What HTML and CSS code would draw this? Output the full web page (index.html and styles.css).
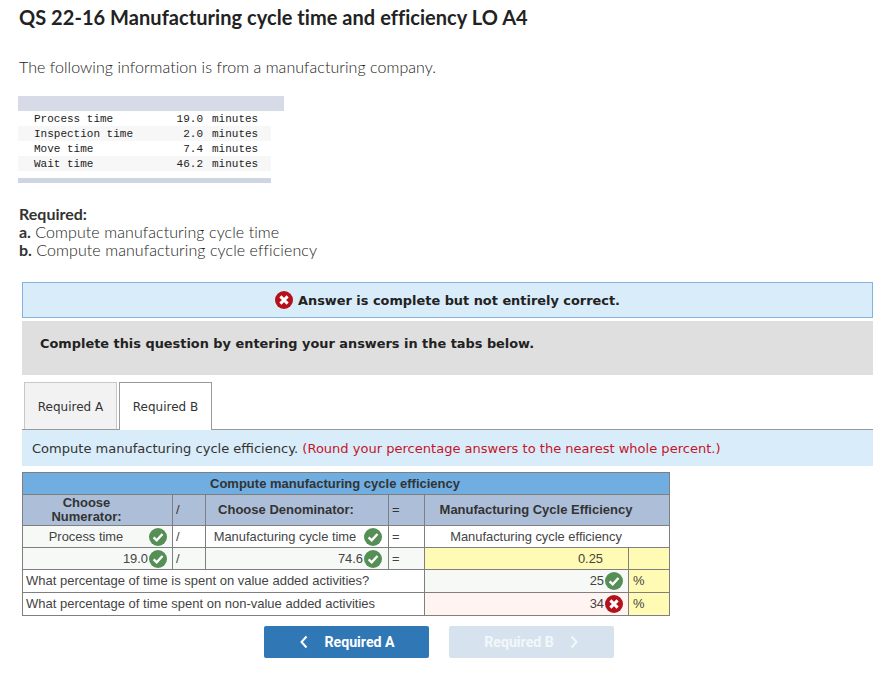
FILE: index.html
```html
<!DOCTYPE html>
<html lang="en">
<head>
<meta charset="utf-8">
<title>QS 22-16</title>
<link rel="stylesheet" href="styles.css">
</head>
<body>
<svg class="defs" width="0" height="0" aria-hidden="true">
  <symbol id="ok" viewBox="0 0 18 18"><circle cx="9" cy="9" r="9" fill="#568f56"/><path d="M4.6 9.4l3.1 3 5.8-6.4" fill="none" stroke="#fff" stroke-width="2.4"/></symbol>
  <symbol id="bad" viewBox="0 0 18 18"><circle cx="9" cy="9" r="9" fill="#b5111b"/><path d="M5.4 5.4l7.2 7.2M12.6 5.400l-7.2 7.2" fill="none" stroke="#fff" stroke-width="3"/></symbol>
</svg>
<main class="page">
  <h1 class="title">QS 22-16 Manufacturing cycle time and efficiency LO A4</h1>
  <p class="intro">The following information is from a manufacturing company.</p>

  <div class="data">
    <div class="data-head"></div>
    <div class="data-row"><span class="d-name">Process time</span><span class="d-num">19.0</span><span class="d-unit">minutes</span></div>
    <div class="data-row alt"><span class="d-name">Inspection time</span><span class="d-num">2.0</span><span class="d-unit">minutes</span></div>
    <div class="data-row"><span class="d-name">Move time</span><span class="d-num">7.4</span><span class="d-unit">minutes</span></div>
    <div class="data-row alt"><span class="d-name">Wait time</span><span class="d-num">46.2</span><span class="d-unit">minutes</span></div>
    <div class="data-foot"></div>
  </div>

  <div class="required">
    <div class="req-head">Required:</div>
    <div><b>a.</b> Compute manufacturing cycle time</div>
    <div><b>b.</b> Compute manufacturing cycle efficiency</div>
  </div>

  <div class="answer"><svg class="ic-lg"><use href="#bad"/></svg><span class="answer-text">Answer is complete but not entirely correct.</span></div>
  <div class="complete">Complete this question by entering your answers in the tabs below.</div>

  <div class="tabs">
    <div class="tab off">Required A</div>
    <div class="tab on">Required B</div>
  </div>
  <div class="instr">Compute manufacturing cycle efficiency. <span class="red">(Round your percentage answers to the nearest whole percent.)</span></div>

  <table class="calc">
    <colgroup><col class="c1"><col class="c2"><col class="c3"><col class="c4"><col class="c5"><col class="c6"></colgroup>
    <tr class="r-title"><th colspan="6">Compute manufacturing cycle efficiency</th></tr>
    <tr class="r-head">
      <th>Choose<br>Numerator:</th><th class="op">/</th><th>Choose Denominator:</th><th class="op">=</th><th colspan="2">Manufacturing Cycle Efficiency</th>
    </tr>
    <tr class="r-a">
      <td class="pale center"><div class="cellic"><span class="grow">Process time</span><svg class="ic"><use href="#ok"/></svg></div></td><td class="op">/</td>
      <td class="center"><div class="cellic wide"><span class="grow">Manufacturing cycle time</span><svg class="ic"><use href="#ok"/></svg></div></td><td class="op">=</td>
      <td colspan="2" class="center eff">Manufacturing cycle efficiency</td>
    </tr>
    <tr class="r-b">
      <td class="pale"><div class="cellic end">19.0<svg class="ic"><use href="#ok"/></svg></div></td><td class="pale op">/</td>
      <td class="pale"><div class="cellic end wide">74.6<svg class="ic"><use href="#ok"/></svg></div></td><td class="pale op">=</td>
      <td class="yellow num">0.25</td><td class="yellow"></td>
    </tr>
    <tr class="r-c">
      <td colspan="4" class="q">What percentage of time is spent on value added activities?</td>
      <td class="pale"><div class="cellic end">25<svg class="ic"><use href="#ok"/></svg></div></td><td class="yellow pct">%</td>
    </tr>
    <tr class="r-c">
      <td colspan="4" class="q">What percentage of time spent on non-value added activities</td>
      <td class="pink"><div class="cellic end">34<svg class="ic"><use href="#bad"/></svg></div></td><td class="yellow pct">%</td>
    </tr>
  </table>

  <div class="nav">
    <div class="btn active"><svg class="chev" viewBox="0 0 8 14"><path d="M6.5 1.5L1.5 7l5 5.500" fill="none" stroke="currentColor" stroke-width="2"/></svg><span>Required A</span></div>
    <div class="btn muted"><span>Required B</span><svg class="chev" viewBox="0 0 8 14"><path d="M1.500 1.500l5 5.500-5 5.500" fill="none" stroke="currentColor" stroke-width="2"/></svg></div>
  </div>
</main>
</body>
</html>
```

FILE: styles.css
```css
* { box-sizing: border-box; }
html, body { margin: 0; padding: 0; background: #fff; }
.defs { display: block; height: 0; }
.page { width: 890px; height: 674px; overflow: hidden; padding-top: 5px; font-family: "Lato", sans-serif; color: #444; }

.title { margin: 0 0 0 19px; font: 700 20px/24px "Lato", sans-serif; color: #222; letter-spacing: .045px; }
.intro { margin: 26px 0 0 19px; font: 300 16px/24px "Lato", sans-serif; color: #222; letter-spacing: .05px; }

.data { margin: 17px 0 0 18px; width: 266px; font: 400 11px/15px "Liberation Mono", monospace; color: #222; }
.data-head { height: 15px; background: #d6dbe7; }
.data-row { display: flex; width: 253px; height: 15px; padding: 0 0 0 16px; line-height: 16px; }
.data-row.alt { background: #f7f7f7; }
.d-name { width: 114px; }
.d-num { width: 55px; text-align: right; }
.d-unit { margin-left: 9px; }
.data-foot { width: 253px; height: 5px; margin-top: 7px; background: #ced7e1; }

.required { margin: 22px 0 0 19px; font: 300 16px/18px "Lato", sans-serif; color: #222; letter-spacing: .08px; }
.required b, .req-head { font-weight: 700; color: #333; letter-spacing: 0; }

.answer { display: flex; align-items: center; justify-content: center; gap: 5px; height: 36px; width: 851px; margin: 23px 0 0 22px; border: 1px solid #85b3dc; background: #d9ecf9; font: 700 12.900px/18px "DejaVu Sans", sans-serif; color: #222; }
.answer-text { padding-top: 2px; }
.ic-lg { width: 18px; height: 18px; flex: none; }
.complete { width: 851px; height: 54px; margin: 3px 0 0 22px; padding: 14px 18px 0; background: #dfdfdf; font: 700 12.900px/18px "DejaVu Sans", sans-serif; color: #222; }

.tabs { display: flex; gap: 2px; height: 48px; margin: 7px 0 0 24px; }
.tab { width: 93px; padding-top: 15px; text-align: center; font: 400 12px/18px "DejaVu Sans", sans-serif; color: #333; }
.tab.off { height: 47px; background: #f2f2f2; border: 1px solid #c8c8c8; border-bottom: 0; }
.tab.on { background: #fff; border: 1px solid #999; border-bottom: 0; position: relative; z-index: 1; }

.instr { width: 851px; height: 37px; margin: -1px 0 0 22px; padding: 10px 10px 0; border-top: 1px solid #999; background: #d9ecf9; font: 400 13.040px/18px "DejaVu Sans", sans-serif; color: #333; }
.red { color: #c4162a; }

.calc { table-layout: fixed; border-collapse: collapse; width: 647px; margin: 6px 0 0 22px; font: 400 12.900px/14px "Liberation Sans", sans-serif; color: #444; }
.c1 { width: 150px; } .c2 { width: 33px; } .c3 { width: 183px; } .c4 { width: 36px; } .c5 { width: 204px; } .c6 { width: 41px; }
.calc th, .calc td { border: 1px solid #7f7f7f; padding: 0 2px; }
.calc th { font-weight: 700; color: #333; padding-right: 24px; }
.r-title th { background: #70ade0; height: 22px; font-size: 13px; }
.r-head th { background: #adbfd8; height: 31px; font-size: 13px; line-height: 14px; }
.r-a td, .r-b td { height: 22px; }
.r-c td { height: 23px; }
.calc .op { text-align: left; padding: 0 0 0 3px; font-weight: 400; }
.center { text-align: center; }
.calc .eff { padding-right: 24px; }
.num { text-align: right; padding-right: 25px !important; }
.pale { background: #f7f9f6; }
.yellow { background: #fffbb5; }
.pink { background: #fff4f2; }
.pct { padding-left: 4px !important; }
.q { padding-left: 3px !important; font-size: 13px; }
.cellic { display: flex; align-items: center; gap: 1px; padding-right: 3px; }
.cellic.wide { padding-right: 4px; }
.cellic.end { justify-content: flex-end; }
.grow { flex: 1; text-align: center; padding-right: 1px; }
.ic { width: 18px; height: 18px; flex: none; }

.nav { display: flex; gap: 20px; margin: 10px 0 0 264px; }
.btn { display: flex; align-items: center; justify-content: center; gap: 16px; width: 165px; height: 32px; border-radius: 2px; font: 700 14.200px/18px "Roboto", sans-serif; color: #fff; }
.btn.active { background: #3077b5; padding-left: 2px; }
.btn.muted { background: #d6e3ee; color: #f3f7fa; padding-right: 1px; }
.chev { width: 8px; height: 14px; flex: none; }
```
